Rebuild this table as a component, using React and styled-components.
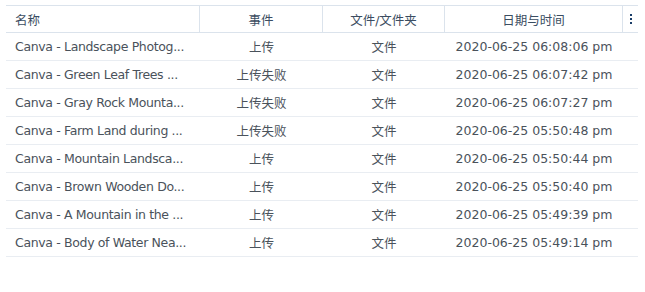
import React from "react";
import styled, { createGlobalStyle } from "styled-components";

const Global = createGlobalStyle`
  html, body { margin: 0; padding: 0; background: #ffffff; }
  body { font-family: "DejaVu Sans", Verdana, "Noto Sans CJK SC", sans-serif; }
`;

const Page = styled.div`
  padding: 5px 7px 0 6px;
  width: 645px;
  box-sizing: border-box;
`;

const Table = styled.div`
  display: grid;
  grid-template-columns: 194px 123px 122px 178px 15px;
  width: 632px;
  border-top: 1px solid #dbe3ec;
`;

const HeadCell = styled.div`
  height: 26px;
  border-bottom: 1px solid #dbe3ec;
  border-right: ${(p) => (p.$last ? "none" : "1px solid #dbe3ec")};
  display: flex;
  align-items: center;
  justify-content: ${(p) => (p.$left ? "flex-start" : "center")};
  padding-left: ${(p) => (p.$left ? "9px" : "0")};
  font-size: 12.5px;
  color: #3b4d61;
  font-family: "DejaVu Sans", "Noto Sans CJK SC", sans-serif;
  box-sizing: content-box;
  white-space: nowrap;
`;

const Cell = styled.div`
  height: 27px;
  border-bottom: 1px solid #e9edf2;
  display: flex;
  align-items: center;
  justify-content: ${(p) => (p.$left ? "flex-start" : "center")};
  padding-left: ${(p) => (p.$left ? "9px" : "0")};
  letter-spacing: ${(p) => (p.$left ? "-0.35px" : "0")};
  font-size: 12.5px;
  color: #4a525b;
  font-family: "DejaVu Sans", "Noto Sans CJK SC", sans-serif;
  white-space: nowrap;
  overflow: hidden;
`;

const Kebab = styled.svg`
  display: block;
`;

const rows = [
  ["Canva - Landscape Photog...", "上传", "文件", "2020-06-25 06:08:06 pm"],
  ["Canva - Green Leaf Trees ...", "上传失败", "文件", "2020-06-25 06:07:42 pm"],
  ["Canva - Gray Rock Mounta...", "上传失败", "文件", "2020-06-25 06:07:27 pm"],
  ["Canva - Farm Land during ...", "上传失败", "文件", "2020-06-25 05:50:48 pm"],
  ["Canva - Mountain Landsca...", "上传", "文件", "2020-06-25 05:50:44 pm"],
  ["Canva - Brown Wooden Do...", "上传", "文件", "2020-06-25 05:50:40 pm"],
  ["Canva - A Mountain in the ...", "上传", "文件", "2020-06-25 05:49:39 pm"],
  ["Canva - Body of Water Nea...", "上传", "文件", "2020-06-25 05:49:14 pm"],
];

export default function App() {
  return (
    <Page>
      <Global />
      <Table>
        <HeadCell $left>名称</HeadCell>
        <HeadCell>事件</HeadCell>
        <HeadCell>文件/文件夹</HeadCell>
        <HeadCell>日期与时间</HeadCell>
        <HeadCell $last>
          <Kebab width="4" height="12" viewBox="0 0 4 12">
            <rect x="1" y="1" width="2" height="2" fill="#1a3d68" />
            <rect x="1" y="5" width="2" height="2" fill="#1a3d68" />
            <rect x="1" y="9" width="2" height="2" fill="#1a3d68" />
          </Kebab>
        </HeadCell>
        {rows.map((r, i) => (
          <React.Fragment key={i}>
            <Cell $left>{r[0]}</Cell>
            <Cell>{r[1]}</Cell>
            <Cell>{r[2]}</Cell>
            <Cell>{r[3]}</Cell>
            <Cell />
          </React.Fragment>
        ))}
      </Table>
    </Page>
  );
}
